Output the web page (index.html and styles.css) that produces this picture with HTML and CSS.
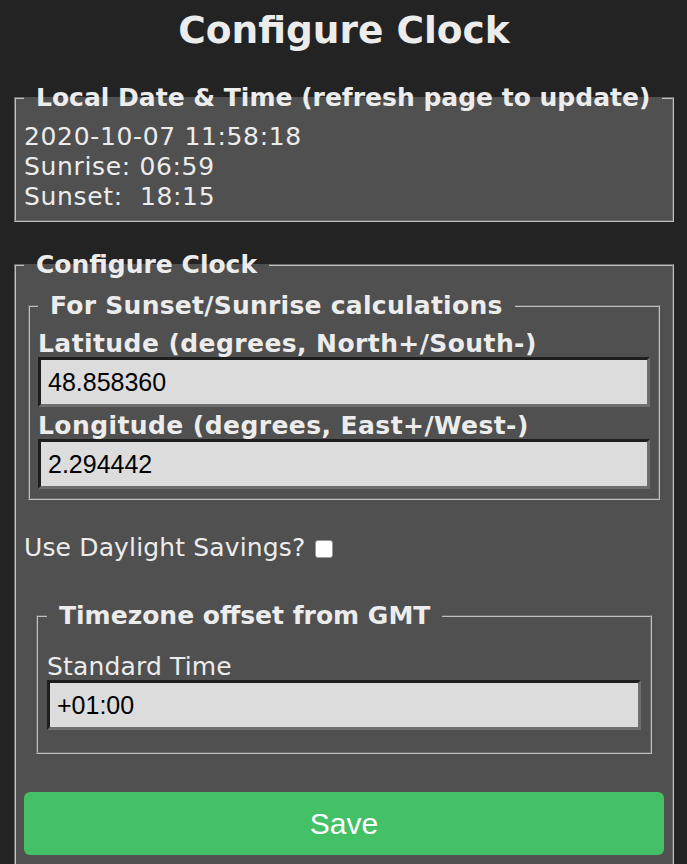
FILE: index.html
```html
<!DOCTYPE html>
<html>
<head>
<meta charset="utf-8">
<title>Configure Clock</title>
<link rel="stylesheet" href="styles.css">
</head>
<body>
<div class="page">
  <h1 class="title">Configure Clock</h1>

  <fieldset class="box box-info">
    <legend class="legend">Local Date &amp; Time (refresh page to update)</legend>
    <div class="info-line">2020-10-07 11:58:18</div>
    <div class="info-line">Sunrise: 06:59</div>
    <div class="info-line">Sunset:&nbsp; 18:15</div>
  </fieldset>

  <form class="config-form">
    <fieldset class="box box-config">
      <legend class="legend">Configure Clock</legend>

      <fieldset class="box box-sun">
        <legend class="legend legend-wide">For Sunset/Sunrise calculations</legend>
        <label class="field-label bold" for="lat">Latitude (degrees, North+/South-)</label>
        <input class="text-input" id="lat" type="text" value="48.858360">
        <label class="field-label bold" for="lon">Longitude (degrees, East+/West-)</label>
        <input class="text-input last" id="lon" type="text" value="2.294442">
      </fieldset>

      <div class="dst-row">
        <label for="dst">Use Daylight Savings?</label>
        <input class="check" id="dst" type="checkbox">
      </div>

      <fieldset class="box box-tz">
        <legend class="legend">Timezone offset from GMT</legend>
        <div class="tz-inner">
          <label class="field-label" for="std">Standard Time</label>
          <input class="text-input last" id="std" type="text" value="+01:00">
        </div>
      </fieldset>

      <button class="save-btn" type="button">Save</button>
    </fieldset>
  </form>
</div>
</body>
</html>
```

FILE: styles.css
```css
html, body {
  margin: 0;
  padding: 0;
  background: #232323;
}

body {
  color: #ececec;
  font-family: "DejaVu Sans", Verdana, sans-serif;
  font-size: 25px;
  line-height: 30px;
  letter-spacing: 0.15px;
}

.page {
  padding: 8px 13px 40px 14px;
}

.title {
  margin: 0 0 30px 0;
  text-align: center;
  font-size: 37.5px;
  line-height: 45px;
  font-weight: bold;
  letter-spacing: 0;
}

.box {
  margin: 0;
  min-width: 0;
  border: 2px groove rgb(192, 192, 192);
  background: #505050;
}

.legend {
  padding: 0 12px;
  font-weight: bold;
  line-height: 30px;
  letter-spacing: 0;
}

.legend-wide {
  letter-spacing: 0.26px;
}

.box-info {
  padding: 9px 8px 8px 8px;
  margin-bottom: 28px;
}

.info-line {
  white-space: pre;
  letter-spacing: 0.65px;
}

.box-config {
  padding: 11px 8px 10px 8px;
}

.box-sun {
  margin: 0 4px;
  padding: 6px 8px 9px 8px;
}

.field-label {
  display: block;
  padding-top: 4px;
  line-height: 26px;
}

.bold {
  font-weight: bold;
  letter-spacing: 0.42px;
}

.text-input {
  display: block;
  box-sizing: border-box;
  width: 100%;
  height: 50px;
  margin: 0 0 2px 0;
  padding: 0 7px;
  border-style: solid;
  border-width: 3px;
  border-color: #1e1e1e #6e6e6e #6e6e6e #1e1e1e;
  background: #dcdcdc;
  color: #000;
  font-family: "Liberation Sans", Arial, sans-serif;
  font-size: 25px;
  letter-spacing: 0;
  outline: none;
}

.text-input.last {
  margin-bottom: 0;
}

.dst-row {
  display: flex;
  align-items: center;
  margin: 33px 0 38px 0;
  height: 30px;
}

.check {
  appearance: none;
  -webkit-appearance: none;
  box-sizing: border-box;
  width: 18px;
  height: 18px;
  margin: 2px 0 0 10px;
  border: 1px solid #9a9a9a;
  border-radius: 3px;
  background: #fff;
}

.box-tz {
  margin: 0 12px;
  padding: 9px;
}

.tz-inner {
  padding: 10px 0 13px 0;
}

.save-btn {
  display: block;
  width: 100%;
  height: 63px;
  margin-top: 38px;
  border: none;
  border-radius: 6px;
  background: #44c066;
  color: #fff;
  font-family: "Liberation Sans", Arial, sans-serif;
  font-size: 30px;
  letter-spacing: 0;
  cursor: pointer;
}
```
